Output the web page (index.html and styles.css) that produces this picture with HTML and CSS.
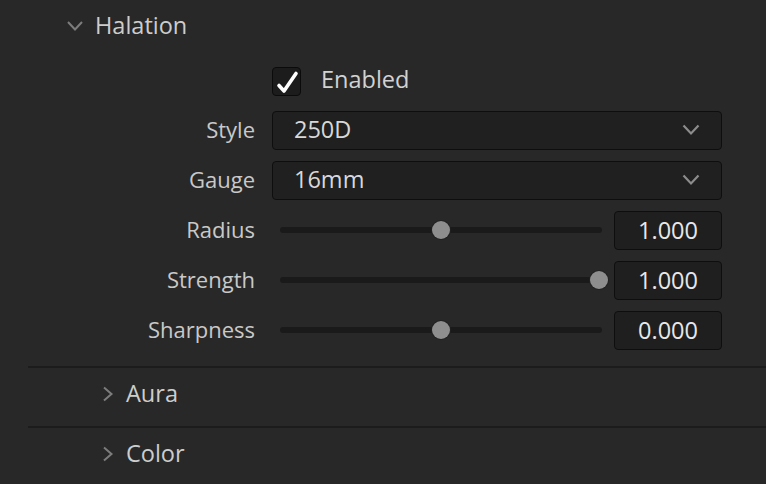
FILE: index.html
```html
<!DOCTYPE html>
<html>
<head>
    <title>Halation</title>
    <link rel="stylesheet" href="styles.css">
</head>
<body>
    <div class="panel">
        <div class="section-head">
            <svg class="chevron-down" width="18" height="12" viewBox="0 0 18 12">
                <path d="M2 2 L9 9.5 L16 2" fill="none" stroke="#7c7c7c" stroke-width="2"/>
            </svg>
            <span class="section-title">Halation</span>
        </div>

        <div class="form">
            <div class="row row-check">
                <div class="label"></div>
                <div class="control">
                    <span class="checkbox">
                        <svg width="27" height="27" viewBox="0 0 27 27">
                            <path d="M6 17.5 L11 23 L23 5.5" fill="none" stroke="#ffffff" stroke-width="3.6" stroke-linecap="round" stroke-linejoin="round"/>
                        </svg>
                    </span>
                    <span class="check-label">Enabled</span>
                </div>
            </div>

            <div class="row">
                <div class="label">Style</div>
                <div class="control">
                    <div class="dropdown">
                        <span>250D</span>
                        <svg width="18" height="12" viewBox="0 0 18 12">
                            <path d="M1.5 1.5 L9 9.5 L16.5 1.5" fill="none" stroke="#8c8c8c" stroke-width="2.2"/>
                        </svg>
                    </div>
                </div>
            </div>

            <div class="row">
                <div class="label">Gauge</div>
                <div class="control">
                    <div class="dropdown">
                        <span>16mm</span>
                        <svg width="18" height="12" viewBox="0 0 18 12">
                            <path d="M1.5 1.5 L9 9.5 L16.5 1.5" fill="none" stroke="#8c8c8c" stroke-width="2.2"/>
                        </svg>
                    </div>
                </div>
            </div>

            <div class="row">
                <div class="label">Radius</div>
                <div class="control">
                    <div class="slider">
                        <div class="track"></div>
                        <div class="thumb-lane"><span class="thumb" style="left: 50%"></span></div>
                    </div>
                    <div class="value">1.000</div>
                </div>
            </div>

            <div class="row">
                <div class="label">Strength</div>
                <div class="control">
                    <div class="slider">
                        <div class="track"></div>
                        <div class="thumb-lane"><span class="thumb" style="left: 100%"></span></div>
                    </div>
                    <div class="value">1.000</div>
                </div>
            </div>

            <div class="row">
                <div class="label">Sharpness</div>
                <div class="control">
                    <div class="slider">
                        <div class="track"></div>
                        <div class="thumb-lane"><span class="thumb" style="left: 50%"></span></div>
                    </div>
                    <div class="value">0.000</div>
                </div>
            </div>
        </div>

        <div class="subsection">
            <div class="sub-head">
                <svg width="12" height="16" viewBox="0 0 12 16">
                    <path d="M2 1.5 L9.5 8 L2 14.5" fill="none" stroke="#7c7c7c" stroke-width="2"/>
                </svg>
                <span class="section-title">Aura</span>
            </div>
        </div>

        <div class="subsection">
            <div class="sub-head">
                <svg width="12" height="16" viewBox="0 0 12 16">
                    <path d="M2 1.5 L9.5 8 L2 14.5" fill="none" stroke="#7c7c7c" stroke-width="2"/>
                </svg>
                <span class="section-title">Color</span>
            </div>
        </div>
    </div>
</body>
</html>
```

FILE: styles.css
```css
html, body {
    margin: 0;
    padding: 0;
    background-color: #282828;
}
body {
    font-family: "Open Sans", "Noto Sans", sans-serif;
    font-size: 23.5px;
    line-height: 26px;
    color: #cfcfcf;
    width: 766px;
    height: 484px;
    overflow: hidden;
}
.section-head {
    display: flex;
    align-items: center;
    height: 52px;
    padding-left: 66px;
}
.chevron-down {
    margin-right: 11px;
}
.section-title {
    color: #cdcdcd;
    padding-bottom: 3px;
}
.form {
    margin-top: 5px;
    margin-bottom: 11px;
}
.row {
    display: grid;
    grid-template-columns: 255px 450px;
    column-gap: 17px;
    align-items: center;
    height: 50px;
}
.row-check {
    height: 48px;
}
.label {
    text-align: right;
    font-size: 22px;
    color: #c9c9c9;
    padding-bottom: 2px;
}
.control {
    display: flex;
    align-items: center;
}
.checkbox {
    width: 27px;
    height: 27px;
    border: 1px solid #0b0b0b;
    border-radius: 4px;
    background-color: #1c1c1c;
    display: flex;
}
.check-label {
    margin-left: 20px;
    color: #d2d2d2;
    padding-bottom: 4px;
}
.dropdown {
    box-sizing: border-box;
    width: 450px;
    height: 39px;
    background-color: #202020;
    border: 1.5px solid #0e0e0e;
    border-radius: 4px;
    display: flex;
    align-items: center;
    justify-content: space-between;
    padding: 0 21px 3px 21px;
    color: #d8d8d8;
}
.dropdown svg {
    margin-top: 3px;
}
.slider {
    position: relative;
    flex: 1;
    height: 20px;
    margin-left: 8px;
    margin-right: 12px;
    display: flex;
    align-items: center;
}
.track {
    width: 100%;
    height: 6px;
    border-radius: 3px;
    background-color: #1a1a1a;
}
.thumb-lane {
    position: absolute;
    left: 3px;
    right: 3px;
    top: 0;
    bottom: 0;
}
.thumb {
    position: absolute;
    top: 1px;
    width: 18px;
    height: 18px;
    margin-left: -9px;
    border-radius: 50%;
    background-color: #8e8e8e;
    box-shadow: 0 0 0 1px #222;
}
.value {
    box-sizing: border-box;
    width: 108px;
    height: 39px;
    padding-bottom: 1px;
    background-color: #1f1f1f;
    border: 1.5px solid #0e0e0e;
    border-radius: 4px;
    display: flex;
    align-items: center;
    justify-content: center;
    color: #e8e8e8;
}
.subsection {
    margin-left: 28px;
    border-top: 2px solid #1c1c1c;
}
.sub-head {
    display: flex;
    align-items: center;
    height: 52px;
    padding-bottom: 6px;
    padding-left: 74px;
}
.sub-head svg {
    margin-right: 12px;
}
```
